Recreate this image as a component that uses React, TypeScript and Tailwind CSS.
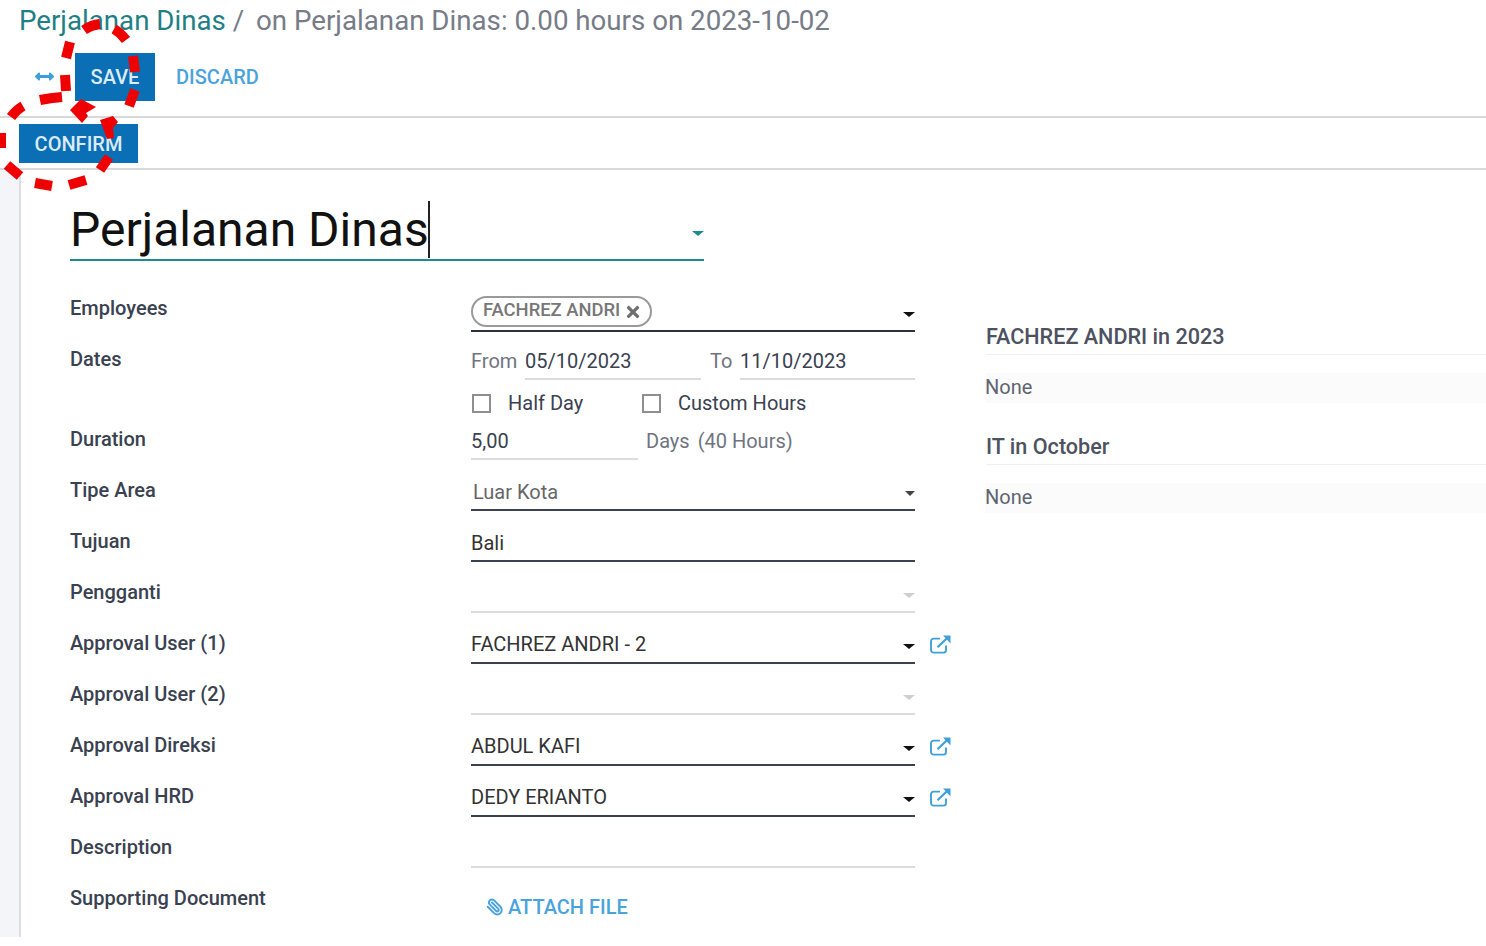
import React from "react";
import { FaArrowsAltH, FaTimes } from "react-icons/fa";
import { Paperclip } from "lucide-react";

const font = { fontFamily: "Roboto, 'Noto Sans', sans-serif" };

function Caret({ light, small }: { light?: boolean; small?: boolean }) {
  return (
    <span
      className={`absolute w-0 h-0 border-t-[5px] ${
        light
          ? "right-0 border-x-[6px] border-x-transparent border-t-[#cfcfcf] bottom-[13px]"
          : small
            ? "right-0 border-x-[5.5px] border-x-transparent border-t-[#444444] bottom-[13px]"
            : "right-0 border-x-[6px] border-x-transparent border-t-[#111111] bottom-[13px]"
      }`}
    />
  );
}

function LinkIcon() {
  return (
    <svg viewBox="0 0 21 19" className="ml-[15px] w-[21px] h-[19px] shrink-0 mb-[10px] self-end" fill="none" stroke="#3f9fd8" strokeWidth="1.9">
      <path d="M16 10.5v4.5a2.6 2.6 0 0 1-2.6 2.6H3.6A2.6 2.6 0 0 1 1 15V6.2a2.6 2.6 0 0 1 2.6-2.6H10" />
      <path d="M7.5 12.2 18 2.2" strokeWidth="2.2" />
      <path d="M13 .5h7.5V8.5z" fill="#3f9fd8" stroke="none" />
    </svg>
  );
}

type R = { label: string; value?: string; dark?: boolean; caret?: boolean; light?: boolean; link?: boolean; color?: string; small?: boolean; indent?: boolean; low?: boolean };

const rows: R[] = [
  { label: "Tipe Area", value: "Luar Kota", dark: true, caret: true, small: true, color: "text-[#666666]", indent: true, low: true },
  { label: "Tujuan", value: "Bali", dark: true, low: true },
  { label: "Pengganti", caret: true, light: true },
  { label: "Approval User (1)", value: "FACHREZ ANDRI - 2", dark: true, caret: true, link: true },
  { label: "Approval User (2)", caret: true, light: true },
  { label: "Approval Direksi", value: "ABDUL KAFI", dark: true, caret: true, link: true },
  { label: "Approval HRD", value: "DEDY ERIANTO", dark: true, caret: true, link: true },
  { label: "Description" },
];

const labelCls = "w-[401px] shrink-0 text-[20px] leading-[30px] font-medium text-[#3a4150]";

function Row({ r }: { r: R }) {
  return (
    <div className="flex h-[51px]">
      <div className={`${labelCls} pt-[15px]`}>{r.label}</div>
      <div className={`relative w-[444px] shrink-0 border-b-2 ${r.dark ? "border-[#3a4150]" : "border-[#dcdcdc]"}`}>
        <span className={`absolute leading-[30px] text-[20px] ${r.low ? "bottom-[2px]" : "bottom-[3px]"} ${r.indent ? "left-[2px]" : "left-0"} ${r.color ?? "text-[#333333]"}`}>{r.value}</span>
        {r.caret && <Caret light={r.light} small={r.small} />}
      </div>
      {r.link && <LinkIcon />}
    </div>
  );
}

function Check({ label }: { label: string }) {
  return (
    <span className="flex items-center">
      <span className="w-[19px] h-[19px] border-2 border-[#8f8f8f] mr-[17px] ml-[1px]" />
      <span className="text-[20px] text-[#3a4150]">{label}</span>
    </span>
  );
}

function Side({ title }: { title: string }) {
  return (
    <div className="mb-[25px]">
      <div className="ml-[1px] text-[21.6px] leading-[38px] font-medium text-[#4c5260] border-b border-[#f0f0f0] h-[37px]">{title}</div>
      <div className="mt-[18px] h-[30px] bg-[#fbfbfb] text-[20px] leading-[28px] text-[#5f6470]">None</div>
    </div>
  );
}

export default function App() {
  return (
    <div style={font} className="relative w-[1486px] h-[946px] bg-white overflow-hidden">
      {/* breadcrumb */}
      <div className="h-[54px] pl-[19px] pt-[2px] text-[27.7px] leading-[38px] whitespace-nowrap">
        <span className="text-[#1f7f86]">Perjalanan Dinas</span>
        <span className="text-[#777c88]"> / </span>
        <span className="text-[#777c88] ml-[5px]">on Perjalanan Dinas: 0.00 hours on 2023-10-02</span>
      </div>
      {/* save row */}
      <div className="flex items-center h-[64px] pb-[16px] border-b-2 border-[#d9d9d9]">
        <FaArrowsAltH className="ml-[35px] w-[19px] h-[19px] text-[#3f9fd8] -mt-[2px]" />
        <button className="ml-[21px] w-[80px] h-[48px] bg-[#0a6fb5] text-[#dcebf6] text-[20px] font-medium">SAVE</button>
        <button className="ml-[21px] text-[20px] font-medium text-[#4aa3dc]">DISCARD</button>
      </div>
      {/* confirm row */}
      <div className="h-[52px] border-b-2 border-[#d9d9d9] pl-[19px] pt-[6px]">
        <button className="w-[119px] h-[39px] bg-[#0a6fb5] text-[#dcebf6] text-[20px] font-medium">CONFIRM</button>
      </div>
      {/* body */}
      <div className="flex h-[767px]">
        <div className="w-[21px] shrink-0 bg-[#f4f5f9] border-r-2 border-[#dcdde3]" />
        <div className="w-[894px] pl-[49px] shrink-0">
          <div className="relative h-[91px] w-[634px] border-b-2 border-[#1f8a90]">
            <span className="absolute left-0 top-[29px] text-[48px] leading-[62px] text-[#111111] whitespace-nowrap">Perjalanan Dinas</span>
            <span className="absolute left-[358px] top-[31px] w-[2px] h-[57px] bg-[#222222]" />
            <span className="absolute right-0 bottom-[23px] w-0 h-0 border-x-[6px] border-x-transparent border-t-[5px] border-t-[#1f8a90]" />
          </div>

          <div className="mt-[20px] flex h-[51px]">
            <div className={`${labelCls} pt-[12px]`}>Employees</div>
            <div className="relative w-[444px] border-b-2 border-[#2b3140]">
              <span className="absolute left-0 top-[15px] h-[31px] flex items-center gap-[4px] pl-[10px] pr-[8px] pb-[3px] rounded-full border-2 border-[#9a9a9a] text-[18.4px] font-medium text-[#777777]">
                FACHREZ ANDRI
                <FaTimes className="w-[18px] h-[18px] mt-[3px] text-[#6f6f6f]" />
              </span>
              <Caret />
            </div>
          </div>

          <div className="flex h-[48px]">
            <div className={`${labelCls} pt-[12px]`}>Dates</div>
            <div className="flex w-[444px] text-[20px] leading-[30px] pt-[14px]">
              <span className="text-[#6f7480] w-[54px] shrink-0">From</span>
              <span className="w-[176px] shrink-0 h-[34px] border-b-2 border-[#dcdcdc] text-[#3a4150]">05/10/2023</span>
              <span className="text-[#6f7480] w-[30px] ml-[9px] shrink-0">To</span>
              <span className="flex-1 h-[34px] border-b-2 border-[#dcdcdc] text-[#3a4150]">11/10/2023</span>
            </div>
          </div>

          <div className="flex h-[40px]">
            <div className="w-[401px] shrink-0" />
            <div className="flex items-center pt-[6px]">
              <span className="w-[170px]"><Check label="Half Day" /></span>
              <Check label="Custom Hours" />
            </div>
          </div>

          <div className="flex h-[40px]">
            <div className={`${labelCls} pt-[4px]`}>Duration</div>
            <div className="flex w-[444px] text-[20px] leading-[30px]">
              <span className="w-[167px] shrink-0 h-[40px] pt-[6px] border-b-2 border-[#dcdcdc] text-[#3a4150]">5,00</span>
              <span className="ml-[8px] pt-[6px] text-[#6f7480]">Days</span>
              <span className="ml-[8px] pt-[6px] text-[#6f7480]">(40 Hours)</span>
            </div>
          </div>

          {rows.map((r) => (
            <Row key={r.label} r={r} />
          ))}

          <div className="flex h-[51px]">
            <div className={`${labelCls} pt-[15px]`}>Supporting Document</div>
            <div className="flex items-center pl-[15px] pt-[26px] text-[20px] font-medium text-[#4aa3dc]">
              <Paperclip strokeWidth={2.6} className="w-[18px] h-[18px] -scale-x-100 mr-[4px]" />
              ATTACH FILE
            </div>
          </div>
        </div>
        <div className="flex-1 ml-[70px] pt-[148px]">
          <Side title="FACHREZ ANDRI in 2023" />
          <Side title="IT in October" />
        </div>
      </div>

      {/* red dashed annotation circles */}
      <svg className="absolute left-0 top-0 pointer-events-none" width="160" height="200" fill="none" stroke="#ee0000" strokeWidth="10">
        <path d="M84 30Q91 25 100 24" />
        <path d="M114 29Q121 33 126 40" />
        <path d="M133 56L135 72" />
        <path d="M135 90L129 106" />
        <path d="M70 42L66 58" />
        <path d="M65 75L66 91" />
        <path d="M40 100Q50 98 62 97" />
        <path d="M11 117Q16 110 23 106" />
        <path d="M1 133L1 148" />
        <path d="M7 165L20 176" />
        <path d="M35 183L52 186" />
        <path d="M69 185L86 180" />
        <path d="M100 170L109 157" />
        <polygon points="70,110 81,99 96,107 86,113 88,116 82,123" fill="#ee0000" stroke="none" />
        <polygon points="100,120 113,116 118,122 113,128 114,138 107,139" fill="#ee0000" stroke="none" />
      </svg>
    </div>
  );
}
